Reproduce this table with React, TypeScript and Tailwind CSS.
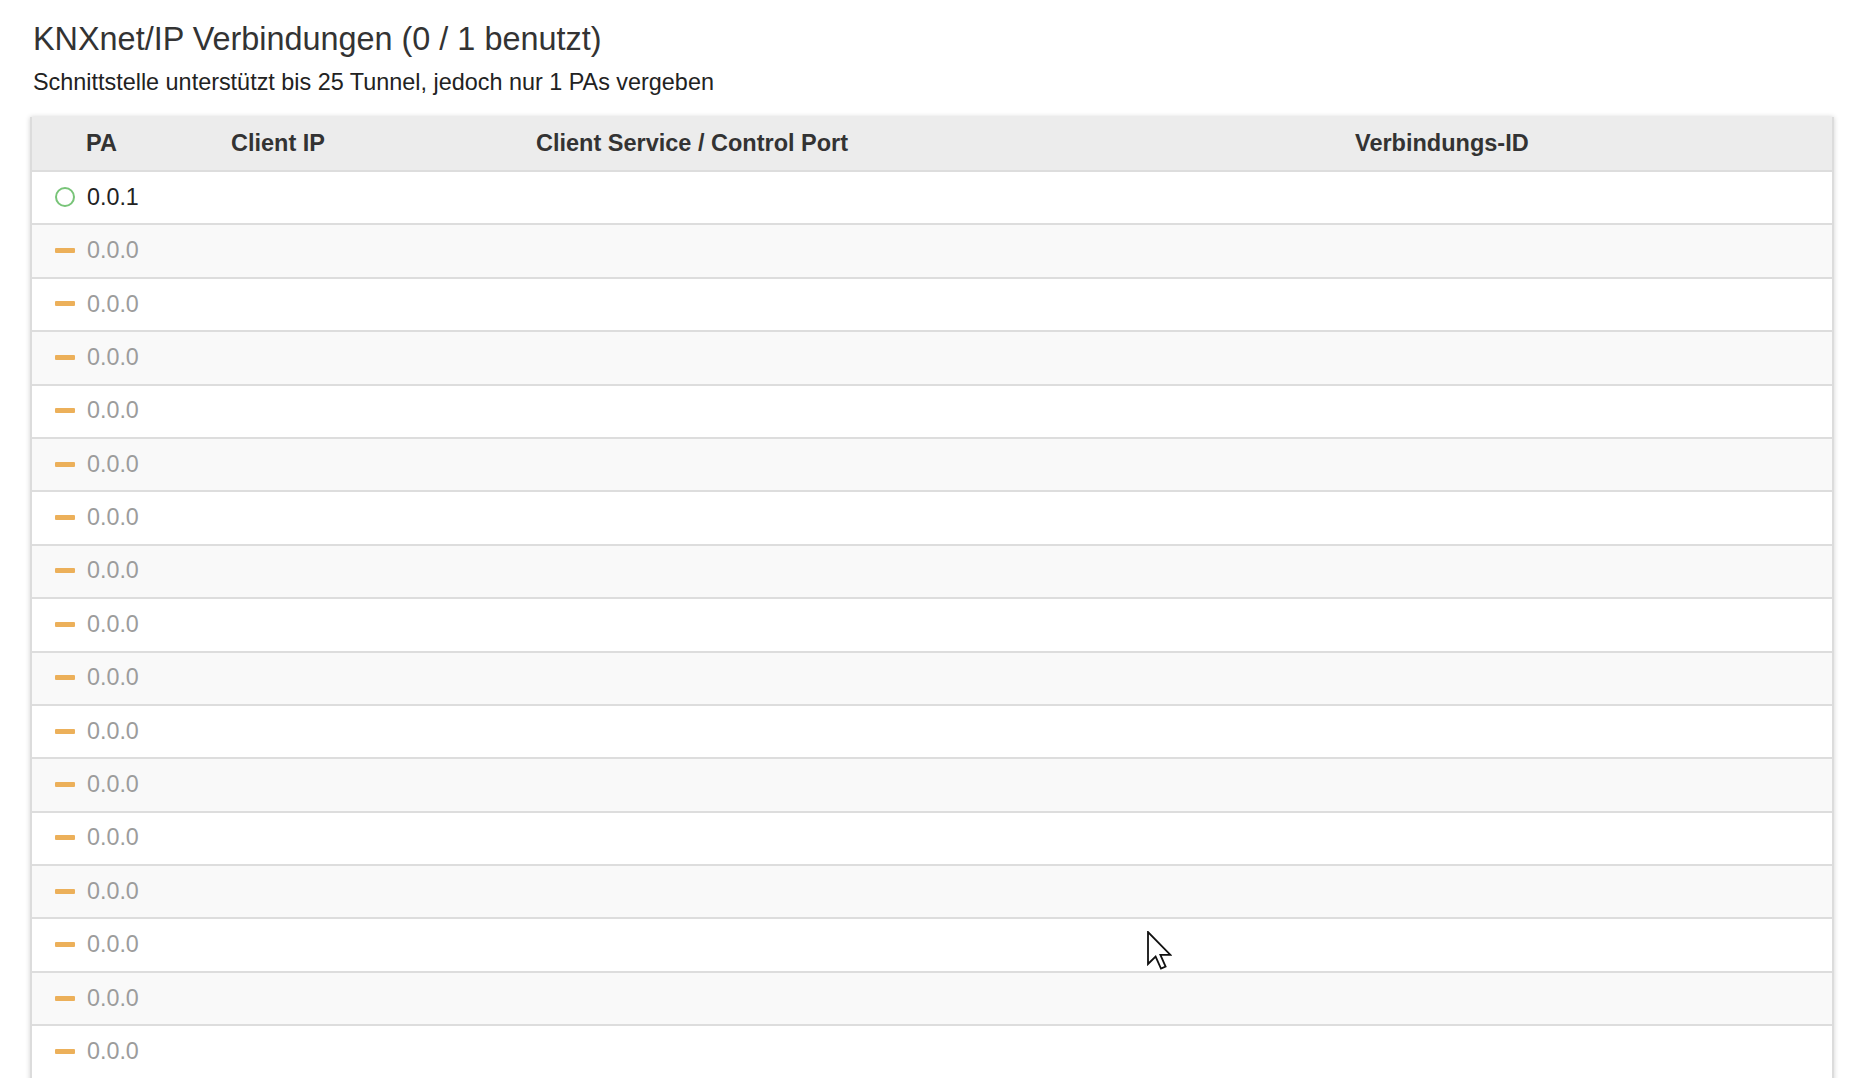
import React from "react";

const rows = Array.from({ length: 25 }, (_, i) => i);

function Cursor() {
  return (
    <svg
      className="absolute left-[1147px] top-[931px]"
      width="25"
      height="39"
      viewBox="0 0 12.5 19.5"
    >
      <path
        d="M0.5 0.5 L0.5 16.5 L4.3 12.8 L7 18.8 L9.3 17.8 L6.7 11.9 L11.7 11.9 Z"
        fill="#ffffff"
        stroke="#111111"
        strokeWidth="0.9"
        strokeLinejoin="miter"
      />
    </svg>
  );
}

export default function App() {
  return (
    <div
      className="relative h-[1078px] w-[1864px] overflow-hidden bg-white text-[#333333]"
      style={{ fontFamily: '"Liberation Sans", Arial, sans-serif' }}
    >
      <div className="px-[30px]">
        <h1 className="pt-[21px] pl-[3px] text-[32.4px] leading-[36px] font-normal text-[#333333]">
          KNXnet/IP Verbindungen (0 / 1 benutzt)
        </h1>
        <p className="mt-[12px] pl-[3px] text-[23.4px] leading-[26px] text-[#222222]">
          Schnittstelle unterstützt bis 25 Tunnel, jedoch nur 1 PAs vergeben
        </p>
        <div className="mt-[22px] border-x-2 border-[#dcdcdc] shadow-[0_0_5px_rgba(0,0,0,0.18)]">
          <div className="grid h-[55px] grid-cols-[199px_305px_819px_1fr] items-center border-b-2 border-[#dddddd] bg-[#ececec] text-[23.5px] font-bold text-[#333333]">
            <div className="pl-[54px]">PA</div>
            <div>Client IP</div>
            <div>Client Service / Control Port</div>
            <div>Verbindungs-ID</div>
          </div>
          {rows.map((i) => (
            <div
              key={i}
              className={
                "grid h-[53.4px] grid-cols-[199px_305px_819px_1fr] items-center border-b-2 border-[#dddddd] pb-[1px] text-[23.3px] " +
                (i % 2 === 1 ? "bg-[#f9f9f9]" : "bg-white")
              }
            >
              <div className="flex items-center pl-[23px]">
                {i === 0 ? (
                  <span className="mr-[12px] box-border inline-block h-[20px] w-[20px] rounded-full border-[2.5px] border-[#78c478]" />
                ) : (
                  <span className="mr-[12px] inline-block h-[5px] w-[20px] rounded-[1px] bg-[#ecb05a]" />
                )}
                <span className={i === 0 ? "text-[#222222]" : "text-[#9c9c9c]"}>
                  {i === 0 ? "0.0.1" : "0.0.0"}
                </span>
              </div>
              <div />
              <div />
              <div />
            </div>
          ))}
        </div>
      </div>
      <Cursor />
    </div>
  );
}
